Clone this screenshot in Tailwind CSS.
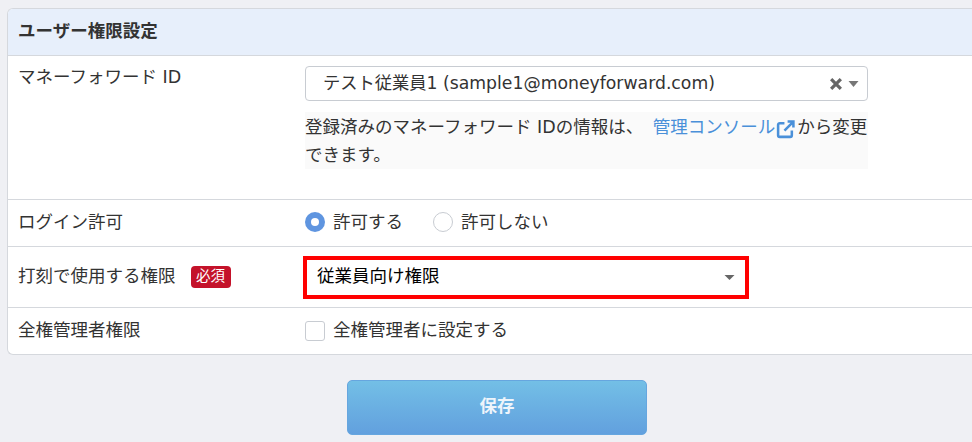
<!DOCTYPE html>
<html lang="ja">
<head>
<meta charset="utf-8">
<script src="https://cdn.jsdelivr.net/npm/@tailwindcss/browser@4"></script>
</head>
<body class="m-0 h-[442px] w-[972px] overflow-hidden bg-[#eff0f4] font-['DejaVu_Sans','Noto_Sans_CJK_JP',sans-serif] text-[17.5px] text-[#333]">
<div class="pl-[7px] pt-2">
  <div class="w-[980px] rounded-l-[6px] border border-r-0 border-[#d5d8dd] bg-white">
    <div class="flex h-[47px] items-center rounded-tl-[5px] border-b border-[#d5d8dd] bg-[#e7effb] pb-[2px] pl-[10px] font-bold">ユーザー権限設定</div>
    <div class="flex h-[144px] border-b border-[#d5d8dd] pl-[10px]">
      <div class="w-[287px] pt-[9px] leading-[24px]">マネーフォワード ID</div>
      <div class="w-[563px] pt-[10px]">
        <div class="flex h-[35px] items-center justify-between rounded-[4px] border border-[#c8ccd2] bg-white pl-[17px] pr-[8px]">
          <span class="text-[17.25px]">テスト従業員1 (sample1@moneyforward.com)</span>
          <span class="flex items-center gap-[5px]">
            <svg class="h-[14px] w-[14px]" viewBox="0 0 13 13"><path d="M2 2l9 9M11 2l-9 9" stroke="#666" stroke-width="3"/></svg>
            <svg class="h-[6px] w-[11px]" viewBox="0 0 10 6"><path d="M0 0h10L5 6z" fill="#777"/></svg>
          </span>
        </div>
        <div class="mt-[11px] h-[57px] bg-[#fafafa] leading-[28px]">
          <div class="whitespace-nowrap pt-[1px]">登録済みのマネーフォワード IDの情報は、 <a class="ml-[4px] text-[#4a90d9]">管理コンソール<svg class="mb-[-3px] ml-[1px] mr-[2px] inline h-[19px] w-[19px]" viewBox="0 0 18 18" fill="none" stroke="#4a90d9" stroke-width="2.4"><path d="M8 3H3.500A1.500 1.500 0 0 0 2 4.500v10A1.500 1.500 0 0 0 3.500 16h10a1.500 1.500 0 0 0 1.500-1.500V10"/><path d="M8 10l8-8M11 1.500h5.500V7"/></svg></a>から変更<br>できます。</div>
        </div>
      </div>
    </div>
    <div class="flex h-[47px] items-center border-b border-[#d5d8dd] pb-[2px] pl-[10px]">
      <div class="w-[287px]">ログイン許可</div>
      <label class="flex items-center gap-[8px]"><span class="flex h-[20px] w-[20px] items-center justify-center rounded-full bg-[#5f95e0]"><span class="h-[8px] w-[8px] rounded-full bg-white"></span></span>許可する</label>
      <label class="ml-[30px] flex items-center gap-[8px]"><span class="h-[20px] w-[20px] rounded-full border border-[#c8ccd2] bg-white"></span>許可しない</label>
    </div>
    <div class="flex h-[61px] items-center border-b border-[#d5d8dd] pl-[10px]">
      <div class="flex w-[285px] items-center"><span class="pb-[2px]">打刻で使用する権限</span><span class="ml-[15px] flex h-[22px] w-[40px] items-center justify-center rounded-[4px] bg-[#c4122a] text-[14.5px] text-white">必須</span></div>
      <div class="flex h-[43px] w-[446px] items-center justify-between border-[4px] border-[#f00] bg-white pl-[10px] pr-[10px] text-black">
        <span class="pb-[2px]">従業員向け権限</span>
        <svg class="h-[5px] w-[11px]" viewBox="0 0 10 5"><path d="M0 0h10L5 5z" fill="#666"/></svg>
      </div>
    </div>
    <div class="flex h-[46px] items-center pl-[10px]">
      <div class="w-[287px] pb-[2px]">全権管理者権限</div>
      <label class="flex items-center gap-[8px]"><span class="h-[20px] w-[20px] rounded-[3px] border border-[#c8ccd2] bg-white"></span><span class="pb-[2px]">全権管理者に設定する</span></label>
    </div>
  </div>
  <div class="mt-[25px] pl-[340px]">
    <button class="h-[55px] w-[300px] rounded-[5px] border border-[#66a6df] bg-gradient-to-b from-[#73bfe6] to-[#62a0de] pb-[3px] text-[17.5px] font-bold text-[#eef5fb]">保存</button>
  </div>
</div>
</body>
</html>
